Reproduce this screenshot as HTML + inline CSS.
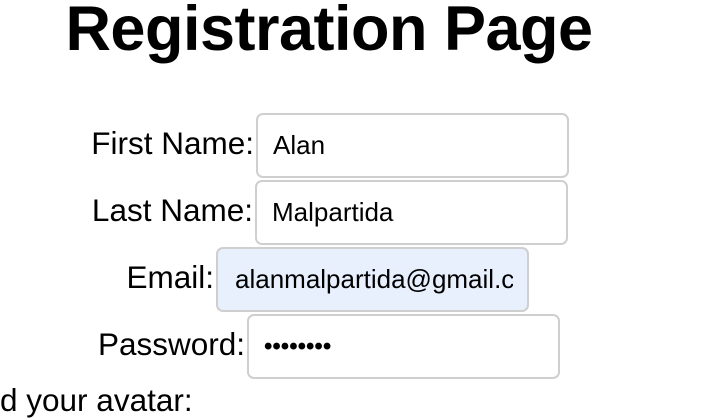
<!DOCTYPE html>
<html><head><style>
body{margin:0;width:728px;height:402px;overflow:hidden;background:#fff;font-family:"Liberation Sans",sans-serif;position:relative}
.t{position:absolute;left:0;width:658px;text-align:center;top:-7px;font-size:63px;font-weight:bold;color:#000;letter-spacing:-0.5px}
.l{position:absolute;font-size:31.5px;color:#000;text-align:right;width:300px;line-height:32px}
.i{position:absolute;width:313px;height:65px;border:2px solid #cfcfcf;border-radius:7px;box-sizing:border-box;font-size:26px;line-height:61px;padding-left:15px;color:#000;background:#fff;overflow:hidden;white-space:nowrap}
</style></head><body>
<div class="t">Registration Page</div>
<div class="l" style="left:-46px;top:127px">First Name:</div>
<div class="i" style="left:256px;top:113px">Alan</div>
<div class="l" style="left:-47px;top:194px">Last Name:</div>
<div class="i" style="left:255px;top:180px">Malpartida</div>
<div class="l" style="left:-86px;top:261px">Email:</div>
<div class="i" style="left:216px;top:247px;background:#e8f0fe;padding-left:17px"><span style="display:inline-block;width:278px;overflow:hidden;vertical-align:top">alanmalpartida@gmail.com</span></div>
<div class="l" style="left:-55px;top:328px">Password:</div>
<div class="i" style="left:247px;top:314px;font-size:24px;font-weight:bold">••••••••</div>
<div class="l" style="left:0;width:auto;text-align:left;top:384px">d your avatar:</div>
</body></html>
